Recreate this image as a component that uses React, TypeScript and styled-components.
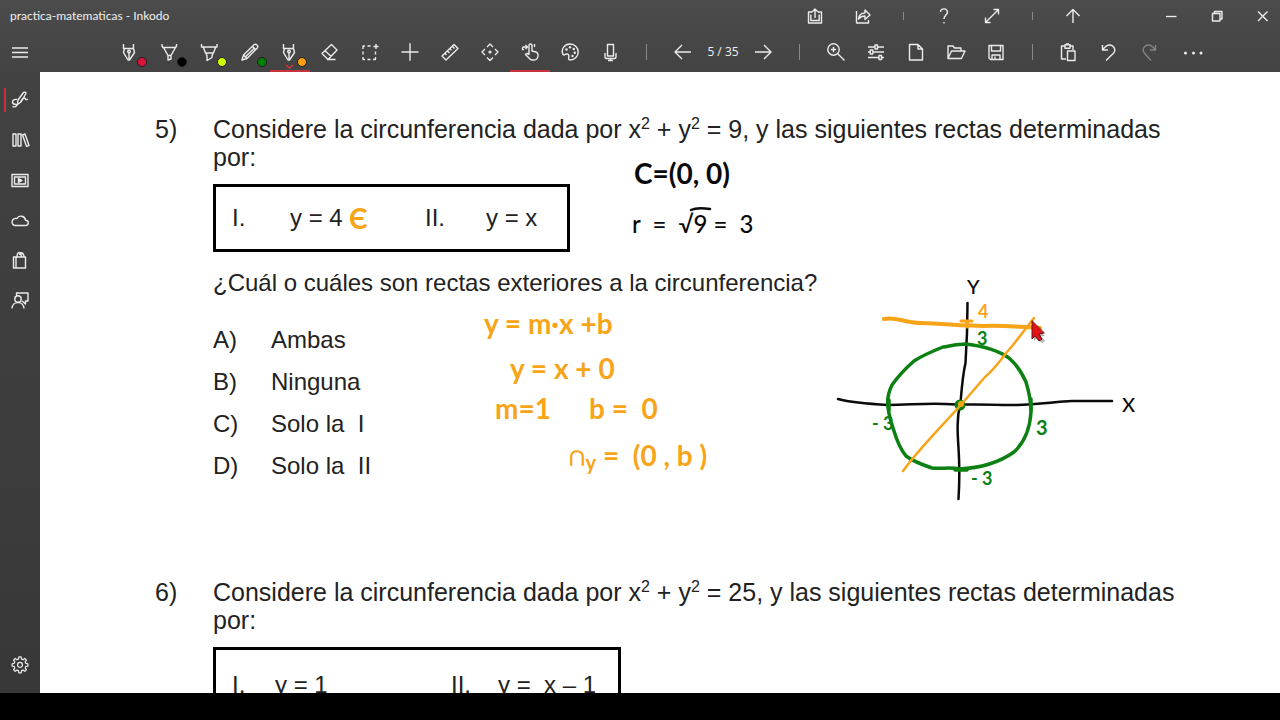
import React from "react";
import styled, { createGlobalStyle } from "styled-components";

const GlobalStyle = createGlobalStyle`
  *, *::before, *::after { box-sizing: border-box; }
  body { margin: 0; background: #000; font-family: "Open Sans", "Noto Sans", sans-serif; }
`;

const Shell = styled.div`
  display: flex;
  flex-direction: column;
  height: 100vh;
  padding-bottom: 27px;
  background: #000;
  overflow: hidden;
`;

const Header = styled.header`
  flex: none;
  background: linear-gradient(#4b4b4b, #434343);
  color: #f0f0f0;
`;

const TitleBar = styled.div`
  display: flex;
  align-items: center;
  height: 32px;
`;

const Title = styled.h1`
  flex: 1;
  margin: 0;
  padding-left: 10px;
  font-family: Lato, "Open Sans", sans-serif;
  font-size: 12px;
  line-height: 16px;
  font-weight: 400;
`;

const WindowControls = styled.div`
  display: flex;
  gap: 12px;
  margin-left: 57px;
`;

const Toolbar = styled.nav`
  display: flex;
  align-items: center;
  height: 40px;
`;

const ToolGroup = styled.div<{ $indent?: number }>`
  display: flex;
  align-items: center;
  margin-left: ${(p) => p.$indent ?? 0}px;
`;

const ToolButton = styled.button<{ $width?: number; $active?: boolean }>`
  position: relative;
  display: flex;
  align-items: center;
  justify-content: center;
  width: ${(p) => p.$width ?? 40}px;
  height: ${(p) => (p.$width && p.$width !== 40 ? 32 : 40)}px;
  padding: 0;
  border: 0;
  border-bottom: 2px solid ${(p) => (p.$active ? "#c8323c" : "transparent")};
  border-top: 2px solid transparent;
  background: none;
  color: #ececec;
  &:disabled { color: #858585; }
`;

const InkDot = styled.span<{ $color: string }>`
  position: absolute;
  right: 3px;
  bottom: 3px;
  width: 10px;
  height: 10px;
  border: 1px solid #1c1c1c;
  border-radius: 50%;
  background: ${(p) => p.$color};
`;

const Divider = styled.span<{ $height: number }>`
  width: 1px;
  height: ${(p) => p.$height}px;
  margin: 0 16px;
  background: #8a8a8a;
`;

const PageCount = styled.span`
  width: 40px;
  font-size: 12px;
  line-height: 16px;
  text-align: center;
  white-space: nowrap;
`;

const Workspace = styled.div`
  display: flex;
  flex: 1;
  min-height: 0;
`;

const Sidebar = styled.aside`
  display: flex;
  flex: none;
  flex-direction: column;
  justify-content: space-between;
  width: 40px;
  padding: 8px 0;
  background: linear-gradient(#424242, #383838);
`;

const SideButton = styled(ToolButton)`
  &::before {
    content: "";
    position: absolute;
    left: 4px;
    width: 2px;
    height: 24px;
    background: ${(p) => (p["aria-current"] ? "#c8323c" : "transparent")};
  }
`;

const Sheet = styled.main`
  position: relative;
  flex: 1;
  padding: 43px 24px 0 115px;
  background: #fff;
  color: #222;
  font-family: "Liberation Sans", Arial, sans-serif;
  font-size: 24px;
  line-height: 28px;
  overflow: hidden;
`;

const Question = styled.section`
  display: grid;
  grid-template-columns: 58px 1fr;
  margin-bottom: 98px;
`;

const QuestionNumber = styled.span`
  font-size: 25px;
`;

const Statement = styled.p`
  max-width: 980px;
  margin: 0;
  font-size: 25px;
`;

const Prompt = styled.p`
  margin: 0;
`;

const Power = styled.sup`
  font-size: 16px;
  line-height: 0;
  vertical-align: 9px;
`;

const Choices = styled.div<{ $columns: string; $width: number; $height: number }>`
  display: grid;
  grid-template-columns: ${(p) => p.$columns};
  align-items: center;
  width: ${(p) => p.$width}px;
  height: ${(p) => p.$height}px;
  margin: 13px 0 17px;
  padding-left: 16px;
  border: 3px solid #000;
`;

const Answers = styled.ul`
  display: flex;
  flex-direction: column;
  gap: 14px;
  margin: 29px 0 0;
  padding: 0;
  list-style: none;
`;

const Answer = styled.li`
  display: grid;
  grid-template-columns: 58px 1fr;
  white-space: pre;
`;

const InkLayer = styled.svg`
  position: absolute;
  top: 0;
  left: 0;
  pointer-events: none;
  fill: none;
  stroke-linecap: round;
  stroke-linejoin: round;
`;

const InkText = styled.text<{ $color: string; $size: number; $heavy?: boolean }>`
  fill: ${(p) => p.$color};
  font-family: Lato, "Open Sans", "DejaVu Sans", sans-serif;
  font-size: ${(p) => p.$size}px;
  font-weight: ${(p) => (p.$heavy ? 700 : 500)};
  white-space: pre;
`;

const ORANGE = "#f7a418";
const GREEN = "#0c8012";
const BLACK = "#0a0a0a";

const shapes: Record<string, React.ReactNode> = {
  menu: <path d="M2 6h16M2 10.500h16M2 15h16" />,
  nib: <path d="M3.500 2v4.500h10V2M4.500 6.500l-1 4L8 18h1.500l5-7.500-1-4M9 10.500V17M7.700 9.500a1.300 1.300 0 1 0 2.600 0a1.300 1.300 0 1 0-2.600 0" />,
  pen: <path d="M2 2v2l1 1.500h12.500l1-1.500V2M3.500 5.500L8 13.500V18l3-1v-3.500l4.500-8M8 13.500h3" />,
  marker: <path d="M1.500 2v3h15.500V2M3.500 5.500l2 5.500h8l2-5.500M6 11l1 3v4.500l5-3V14l1-3" />,
  pencil: <path d="M2 18l1.500-5L14 2.700c2-1.500 4.800 1 3.300 3.300L7 16.500zM3.500 13L7 16.500M12.500 4.500L15.800 7.700M5.500 14.700L14.500 6" />,
  eraser: <path d="M7.500 17L2 11.500 11.500 2.500 17 8 8.500 17zM5 8.800l6.200 5.800M7 17.500h8.500" />,
  select: <path d="M5 4H3.500Q3 4 3 4.500V7M7.500 4h3M3 9.500v3M3 15v2q0 .5.5.5H5M7.500 17.500h3M13 17.500h2q.5 0 .5-.5v-2M15.500 12.500v-3M16 2v5M13.500 4.500h5" />,
  plus: <path d="M10 1.500v17M1.500 10h17M9.300 2h1.400M9.300 18h1.400" />,
  ruler: <path d="M2 14L14 2.500 18 6.500 6 18zM5 11.500l1.500 1.500M7.500 9l2 2M10 6.800l1.500 1.500M12.500 4.500l2 2" />,
  move: (
    <>
      <path d="M7 5l3-3 3 3M7 15.500l3 3 3-3M5 7l-3 3 3 3M15 7l3 3-3 3" />
      <circle cx="10" cy="10" r=".9" fill="currentColor" />
    </>
  ),
  touch: <path d="M9 13V3.500a1.500 1.500 0 0 1 3 0V9l4 1q2 .7 2 2.500v1.500q-.5 4-4 4H12q-1.500 0-2.500-1.500L5.500 12.500q1.500-2 3.500 0M7 5H3q-1.500 3 1 2.500M5.500 3l2 2-2 2M14.500 2v3" />,
  palette: (
    <>
      <path d="M3 12.500C.5 7 5 2 10 2s8.200 4 8.200 8-3.500 8-8 8c-2 0-1.700-1.500-1.400-3 .4-2.300-.8-3.300-2.500-3-1.300.4-2 1.700-3.300.5z" />
      <g fill="currentColor" stroke="none">
        <circle cx="6.500" cy="7.500" r="1.200" /><circle cx="10" cy="5.300" r="1.200" /><circle cx="13.800" cy="7" r="1.200" />
        <circle cx="14.800" cy="10.700" r="1.200" /><circle cx="12.500" cy="14" r="1.200" />
      </g>
    </>
  ),
  mic: <path d="M7.500 2.500h6V14h-6zM5 11v4q0 1.500 1.500 1.500h8Q16 16.500 16 15v-4M10.500 16.500v2M8 18.500h5" />,
  left: <path d="M18 10H2.500M9 3L2 10l7 7" />,
  right: <path d="M2 10h15.500M11 3l7 7-7 7" />,
  zoom: <path d="M1.800 7.500a5.700 5.700 0 1 0 11.400 0a5.700 5.700 0 1 0-11.400 0M11.500 11.500l7 7M4.800 7.500h5.400M7.500 4.800v5.400" />,
  sliders: <path d="M2 5h7M12 5h6M2 10h2M7 10h11M2 15.500h11M16 15.500h2M9 3h2.500v4H9zM4.300 8h2.500v4H4.300zM13 13.500h2.500v4H13z" />,
  file: <path d="M3.500 2.500h8.500l4.500 4.500v11h-13zM12 2.500V7h4.500" />,
  folder: <path d="M2 16.500V4h5l1.500 2H15v3M2 16.500L5.500 9H19l-3.500 7.500z" />,
  save: <path d="M3 3.500h14v14H4.500L3 16zM5.500 3.500V9h9V3.500M6 17.500V13h8v4.500M9 14.500v3" />,
  paste: <path d="M7 17H2.500V4H6M14 8V4h-3M6 2.800h5v3.400H6zM8.500 9H16v9.500H8.500zM7 2h3" />,
  undo: <path d="M3.500 3v5h5.500M4 7.500C8 2 11 2.500 13.500 3.800c3 2 3 5.700.5 8L7 18.500" />,
  redo: <path d="M16.500 3v5H11M16 7.500C12 2 9 2.500 6.500 3.800c-3 2-3 5.700-.5 8L12 18.500" />,
  more: (
    <g fill="currentColor" stroke="none">
      <circle cx="2.500" cy="11" r="1.500" /><circle cx="10.500" cy="11" r="1.500" /><circle cx="18" cy="11" r="1.500" />
    </g>
  ),
  export: <path d="M7 6H3.500v11h13V6H13M5.800 8.500v6h8.400v-6M10 12V3M7 6l3-3 3 3" />,
  share: <path d="M3.500 5v12h12v-3M5.500 13c.5-4 3-6 6.500-6V4l5 5-5 4.500V10c-3 0-5 1-6.500 3z" />,
  help: <path d="M6.500 6C6.500 1.500 14 2 13.500 6.500c-.5 2.500-3.500 3-3.500 6.500M10 16v1.500" />,
  expand: <path d="M3.500 16.500l13-13M11.500 3.500h5v5M3.500 11.500v5h5" />,
  up: <path d="M10 17V3.500M3.500 10L10 3.500l6.500 6.500" />,
  minimize: <path d="M5 10.500h10.500" />,
  restore: <path d="M5.500 7.500h7.500V15H5.500zM7.500 7.500V5.500H15V13h-2" />,
  close: <path d="M5 5.500l9.500 9.500M14.500 5.500L5 15" />,
  ink: <path d="M7.500 14.500l.5-4.500L13.500 2.500q2-1 2.500 1L11 12zM7 9.500c-3-.5-5 1-4.500 3s2.500 2 4 2-.5 3.500-4 2M10.500 12c1-2 2.500-4 4-4s0 3 3.500 1" />,
  library: <path d="M3 4h3v12H3zM8 4h3v12H8zM12.500 5l2.500-1 4 11.500-2.500.8z" />,
  video: (
    <>
      <path d="M2 4.500h16v12H2zM4.500 7h11v7h-11z" />
      <path d="M8.500 8.500v4l3.500-2z" fill="currentColor" />
    </>
  ),
  cloud: <path d="M5.500 15.500h9.700c4 0 4-5 .3-5.300C15 6 9 4.500 7 8.500 1 7.500.5 15.500 5.500 15.500z" />,
  bag: <path d="M3.500 7h12v11h-12zM6 18V7M7 7c0-6 4-6 4.500 0M9.500 5c1-4 4.500-2 4.500 2" />,
  feedback: <path d="M6.500 6V3H18v8h-2.500v3L12 11M4.800 9a3.200 3.200 0 1 0 6.400 0a3.200 3.200 0 1 0-6.400 0M2 18.500c.5-8 11.500-8 12 0" />,
  gear: <path d="M8.700 2h2.600l.5 2.400 1.600.7 2-1.400 1.900 1.900-1.400 2 .7 1.600 2.400.5v2.600l-2.400.5-.7 1.600 1.400 2-1.900 1.900-2-1.400-1.600.7-.5 2.400H8.700l-.5-2.400-1.600-.7-2 1.400-1.900-1.900 1.400-2-.7-1.600L1 12.300V9.700l2.400-.5.700-1.600-1.400-2 1.900-1.900 2 1.400 1.600-.7zM7.200 11a2.800 2.800 0 1 0 5.600 0a2.800 2.800 0 1 0-5.600 0" transform="translate(1.200 .2) scale(.88)" />,
};

function Icon({ name }: { name: string }) {
  return (
    <svg width="20" height="20" viewBox="0 0 20 20" fill="none" stroke="currentColor" strokeWidth="1.4" strokeLinejoin="round" aria-hidden="true">
      {shapes[name]}
    </svg>
  );
}

function Tool({ icon, label, width, active, dot, disabled }: {
  icon: string; label: string; width?: number; active?: boolean; dot?: string; disabled?: boolean;
}) {
  return (
    <ToolButton type="button" aria-label={label} $width={width} $active={active} disabled={disabled}>
      <Icon name={icon} />
      {dot && <InkDot $color={dot} />}
      {dot && active && <ActiveMark />}
    </ToolButton>
  );
}

const Chevron = styled.svg`
  position: absolute;
  bottom: 1px;
  left: 15px;
`;

function ActiveMark() {
  return (
    <Chevron width="9" height="5" viewBox="0 0 9 5" aria-hidden="true">
      <path d="M1 1l3.500 3L8 1" fill="none" stroke="#d8323c" strokeWidth="1.5" />
    </Chevron>
  );
}

const Squared = ({ base }: { base: string }) => (
  <>{base}<Power>2</Power></>
);

function Annotations() {
  return (
    <InkLayer width="1120" height="440" viewBox="40 72 1120 440">
      <g stroke={BLACK} strokeWidth="2.500">
        <path d="M691 210q6-3 19-1" />
        <path d="M967.500 303c0 25-1 45-2 60-3 13-4 28-5 40-4 15-3 30-2 45 1 15 1 35 0 51" />
        <path d="M838 399c15 4 32 5 50 6 20 0 38-2 57-1 20 1 40 0 57 1 25 1 50-3 70-4h40" />
      </g>
      <path stroke={GREEN} strokeWidth="3.500" d="M966 344c-8 0-16 2-23 3-10 4-20 8-29 14-8 7-15 14-22 24-4 8-5 15-4 22 1 10 4 18 6 24 3 10 7 19 12 25 8 6 17 9 26 12 10 1 19-1 27 1 22-1 41-7 55-17 11-10 16-24 17-40 0-10-2-20-5-30-4-9-9-17-17-24-10-7-26-12-43-14z" />
      <path stroke={GREEN} strokeWidth="3.500" d="M889 400v10M1031 399v11M955 470h12" />
      <circle cx="960" cy="405" r="5.500" fill={GREEN} />
      <circle cx="961" cy="404" r="3" fill={ORANGE} />
      <g stroke={ORANGE}>
        <path strokeWidth="4" d="M884 319c12-3 20 4 37 4 25 1 45 3 62 3 20-1 38 1 57 2" />
        <path strokeWidth="3" d="M961 321h11M967 321v6" />
        <path strokeWidth="2.500" d="M903 471c15-21 35-41 56-64l26-30c12-10 17-20 28-32l21-27" />
      </g>
      <g>
        <path d="M1034 324v17l3-3 5 5 3-2-4-5h4z" fill="#000" opacity=".3" />
        <path d="M1032 321v18l3-3 4 5 3-2-3-5 5-1z" fill="#e01218" stroke="#6a1014" strokeWidth="1" />
      </g>

      <InkText $color={BLACK} $size={28} $heavy x="634" y="184">C=(0, 0)</InkText>
      <InkText $color={BLACK} $size={24} x="632" y="233">{"r  =  √9 =  3"}</InkText>
      <InkText $color={ORANGE} $size={28} $heavy x="349" y="229">Є</InkText>
      <InkText $color={ORANGE} $size={28} $heavy x="484" y="334">y = m·x +b</InkText>
      <InkText $color={ORANGE} $size={28} $heavy x="510" y="379">y = x + 0</InkText>
      <InkText $color={ORANGE} $size={28} $heavy x="495" y="419">m=1</InkText>
      <InkText $color={ORANGE} $size={28} $heavy x="589" y="419">{"b =  0"}</InkText>
      <InkText $color={ORANGE} $size={28} $heavy x="569" y="466">∩<tspan fontSize="20" dy="4">y</tspan><tspan dy="-4">{" =  (0 , b )"}</tspan></InkText>
      <InkText $color={ORANGE} $size={18} $heavy x="978" y="318">4</InkText>
      <InkText $color={GREEN} $size={18} $heavy x="977" y="345">3</InkText>
      <InkText $color={GREEN} $size={18} $heavy x="872" y="430">- 3</InkText>
      <InkText $color={GREEN} $size={20} $heavy x="1036" y="435">3</InkText>
      <InkText $color={GREEN} $size={18} $heavy x="971" y="485">- 3</InkText>
      <InkText $color={BLACK} $size={20} x="967" y="294">Y</InkText>
      <InkText $color={BLACK} $size={20} x="1122" y="412">X</InkText>
    </InkLayer>
  );
}

const sideItems = [
  ["ink", "Tinta"], ["library", "Biblioteca"], ["video", "Videos"],
  ["cloud", "Nube"], ["bag", "Tienda"], ["feedback", "Comentarios"],
];

export default function App() {
  return (
    <Shell>
      <GlobalStyle />
      <Header>
        <TitleBar>
          <Title>practica-matematicas - Inkodo</Title>
          <Tool icon="export" label="Exportar" width={48} />
          <Tool icon="share" label="Compartir" width={48} />
          <Divider $height={8} />
          <Tool icon="help" label="Ayuda" width={48} />
          <Tool icon="expand" label="Pantalla completa" width={48} />
          <Divider $height={8} />
          <Tool icon="up" label="Ocultar barra" width={48} />
          <WindowControls>
            <Tool icon="minimize" label="Minimizar" width={34} />
            <Tool icon="restore" label="Restaurar" width={34} />
            <Tool icon="close" label="Cerrar" width={34} />
          </WindowControls>
        </TitleBar>
        <Toolbar>
          <Tool icon="menu" label="Menú" />
          <ToolGroup $indent={70}>
            <Tool icon="nib" label="Pluma roja" dot="#dc143c" />
            <Tool icon="pen" label="Bolígrafo negro" dot="#000" />
            <Tool icon="marker" label="Marcador amarillo" dot="#ccff00" />
            <Tool icon="pencil" label="Lápiz verde" dot="#008000" />
            <Tool icon="nib" label="Pluma naranja" dot="#ff9f0f" active />
            <Tool icon="eraser" label="Borrador" />
            <Tool icon="select" label="Seleccionar" />
            <Tool icon="plus" label="Insertar" />
            <Tool icon="ruler" label="Regla" />
            <Tool icon="move" label="Mover" />
            <Tool icon="touch" label="Escritura táctil" active />
            <Tool icon="palette" label="Colores" />
            <Tool icon="mic" label="Grabar" />
          </ToolGroup>
          <Divider $height={16} />
          <Tool icon="left" label="Página anterior" />
          <PageCount>5 / 35</PageCount>
          <Tool icon="right" label="Página siguiente" />
          <Divider $height={16} />
          <ToolGroup>
            <Tool icon="zoom" label="Acercar" />
            <Tool icon="sliders" label="Ajustes de página" />
            <Tool icon="file" label="Nuevo" />
            <Tool icon="folder" label="Abrir" />
            <Tool icon="save" label="Guardar" />
          </ToolGroup>
          <Divider $height={16} />
          <Tool icon="paste" label="Pegar" />
          <Tool icon="undo" label="Deshacer" />
          <Tool icon="redo" label="Rehacer" disabled />
          <ToolGroup $indent={4}>
            <Tool icon="more" label="Más" />
          </ToolGroup>
        </Toolbar>
      </Header>
      <Workspace>
        <Sidebar>
          <div>
            {sideItems.map(([icon, label], i) => (
              <SideButton key={icon} type="button" aria-label={label} aria-current={i === 0 ? "page" : undefined}>
                <Icon name={icon} />
              </SideButton>
            ))}
          </div>
          <SideButton type="button" aria-label="Configuración"><Icon name="gear" /></SideButton>
        </Sidebar>
        <Sheet>
          <Question>
            <QuestionNumber>5)</QuestionNumber>
            <div>
              <Statement>
                Considere la circunferencia dada por <Squared base="x" /> + <Squared base="y" /> = 9, y las siguientes rectas determinadas por:
              </Statement>
              <Choices $columns="58px 135px 61px 1fr" $width={357} $height={68}>
                <span>I.</span><span>y = 4</span><span>II.</span><span>y = x</span>
              </Choices>
              <Prompt>¿Cuál o cuáles son rectas exteriores a la circunferencia?</Prompt>
              <Answers>
                <Answer><span>A)</span><span>Ambas</span></Answer>
                <Answer><span>B)</span><span>Ninguna</span></Answer>
                <Answer><span>C)</span><span>Solo la  I</span></Answer>
                <Answer><span>D)</span><span>Solo la  II</span></Answer>
              </Answers>
            </div>
          </Question>
          <Question>
            <QuestionNumber>6)</QuestionNumber>
            <div>
              <Statement>
                Considere la circunferencia dada por <Squared base="x" /> + <Squared base="y" /> = 25, y las siguientes rectas determinadas por:
              </Statement>
              <Choices $columns="43px 176px 47px 1fr" $width={408} $height={76}>
                <span>I.</span><span>y = 1</span><span>II.</span><span>y =&nbsp; x – 1</span>
              </Choices>
            </div>
          </Question>
          <Annotations />
        </Sheet>
      </Workspace>
    </Shell>
  );
}
